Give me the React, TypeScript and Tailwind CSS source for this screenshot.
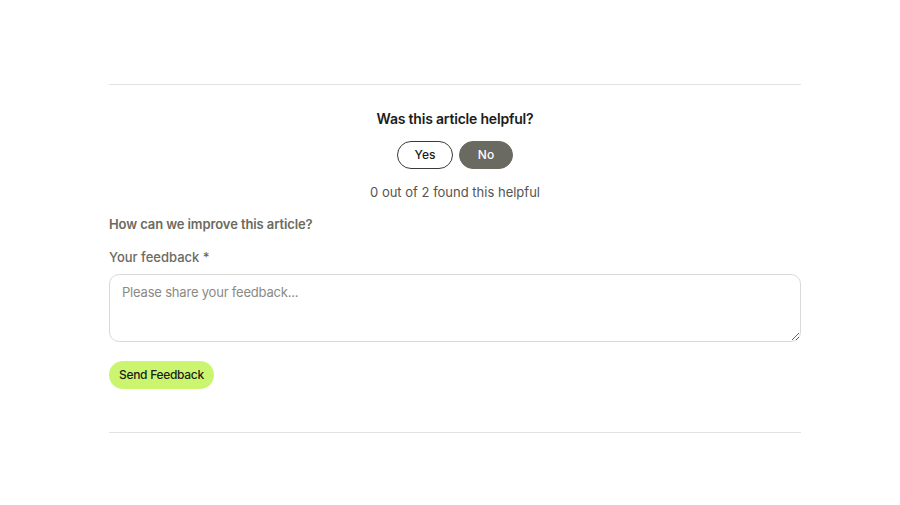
import React, { useState } from 'react';

const font = { fontFamily: 'Inter, "Noto Sans", sans-serif' };

export default function App() {
  const [vote, setVote] = useState<'yes' | 'no' | null>('no');
  const [feedback, setFeedback] = useState('');

  return (
    <div className="min-h-[505px] w-full bg-white pt-[84px]" style={font}>
      <div className="ml-[109px] w-[692px] border-t border-[#e2e2e2]">
        {/* Helpful vote */}
        <div className="flex flex-col items-center pt-[24px]">
          <h2 className="text-[14px] font-semibold leading-5 tracking-[-0.2px] text-[#1c1c1a]">
            Was this article helpful?
          </h2>
          <div className="mt-[12px] flex gap-[6px]">
            <button
              onClick={() => setVote('yes')}
              className={`h-[28px] w-[56px] rounded-full border text-[12px] font-medium ${
                vote === 'yes'
                  ? 'border-[#6b6a61] bg-[#6b6a61] text-white'
                  : 'border-[#3a3a36] bg-white text-[#1c1c1a]'
              }`}
            >
              Yes
            </button>
            <button
              onClick={() => setVote('no')}
              className={`h-[28px] w-[54px] rounded-full border text-[12px] font-medium ${
                vote === 'no'
                  ? 'border-[#6b6a61] bg-[#6b6a61] text-white'
                  : 'border-[#3a3a36] bg-white text-[#1c1c1a]'
              }`}
            >
              No
            </button>
          </div>
          <p className="mt-[13px] text-[13px] leading-5 text-[#55554f]">0 out of 2 found this helpful</p>
        </div>

        {/* Feedback form */}
        <div className="pt-[12px]">
          <p className="text-[13px] font-semibold leading-5 tracking-[-0.1px] text-[#6b6a61]">
            How can we improve this article?
          </p>
          <label className="mt-[13px] block text-[13px] font-medium leading-5 text-[#6b6a61]">
            Your feedback *
          </label>
          <textarea
            value={feedback}
            onChange={(e) => setFeedback(e.target.value)}
            placeholder="Please share your feedback..."
            className="mt-[7px] block h-[68px] w-full rounded-[10px] border border-[#d9d9d6] px-[12px] py-[8px] text-[13px] tracking-[-0.2px] text-[#1c1c1a] outline-none placeholder:text-[#8a8a84]"
          />
          <button className="mt-[19px] h-[28px] rounded-full bg-[#ccf56f] px-[10px] text-[12px] font-medium tracking-[-0.3px] text-[#1c1c1a]">
            Send Feedback
          </button>
        </div>
      </div>
      <div className="ml-[109px] mt-[43px] w-[692px] border-t border-[#e2e2e2]" />
    </div>
  );
}
